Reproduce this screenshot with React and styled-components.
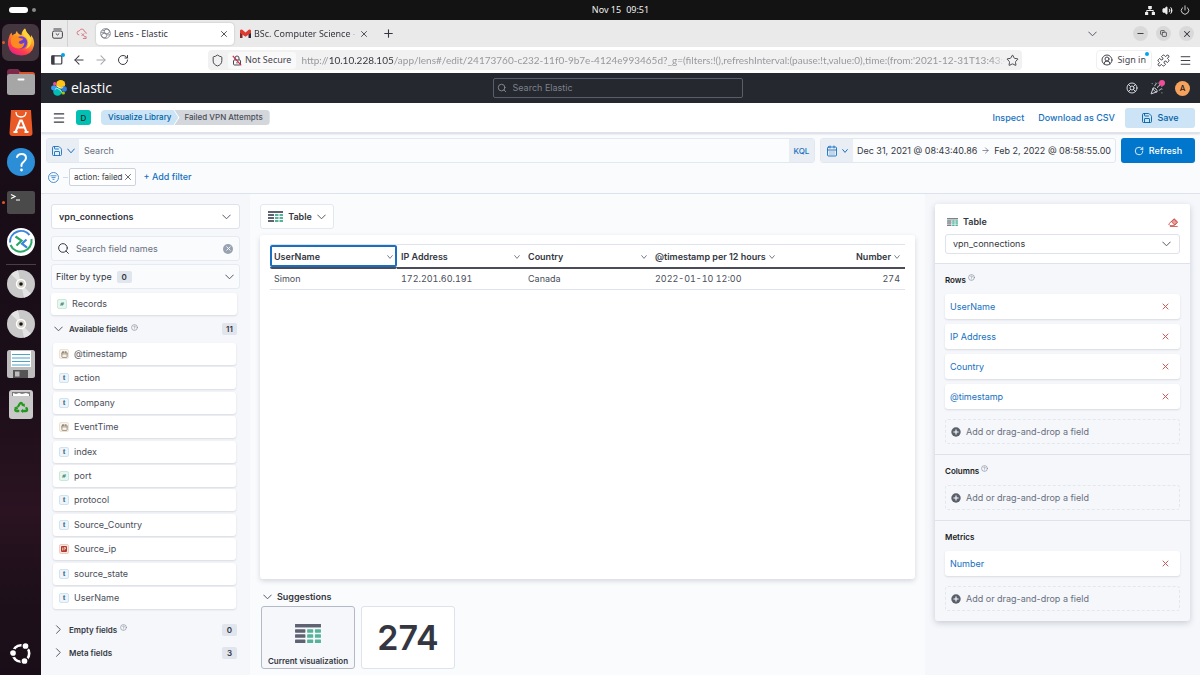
import React from "react";
import styled, { createGlobalStyle, css } from "styled-components";
import {
  ArrowLeft, ArrowRight, Calendar, CalendarDays, CircleHelp,
  CircleUserRound, LifeBuoy, Menu, Minus, PartyPopper, Plus, Power, Puzzle,
  RotateCw, Save, Search, Shield, Star, Volume2, X, Copy,
} from "lucide-react";

const c = {
  ink: "#343741",
  body: "#4a4e59",
  mute: "#69707d",
  link: "#1571bf",
  line: "#dde2ec",
  side: "#f5f7fb",
  page: "#fafbfd",
  badge: "#e0e5ee",
  shadow: "0 1px 2px rgba(60, 70, 90, 0.16)",
};
const ui = `Inter, "Liberation Sans", sans-serif`;
const chrome = `"Noto Sans", "Open Sans", sans-serif`;

const Global = createGlobalStyle`
  * { box-sizing: border-box; }
  body { margin: 0; font: 9px/12px ${ui}; color: ${c.ink}; background: ${c.page}; }
  button, input, select { font: inherit; color: inherit; margin: 0; padding: 0; border: 0; background: none; }
  button { cursor: pointer; display: inline-flex; align-items: center; justify-content: center; flex: none; white-space: nowrap; }
  a { text-decoration: none; color: ${c.link}; }
  svg { flex: none; display: block; }
  h2, h3, ul { margin: 0; padding: 0; font-size: inherit; list-style: none; }
`;

/* ---------- desktop shell ---------- */
const Desktop = styled.div`
  min-height: 100vh;
  display: grid;
  grid-template: 20px 1fr / 41px minmax(0, 1fr);
`;
const TopBar = styled.header`
  grid-column: 1 / -1;
  display: grid;
  grid-template-columns: 41px 1fr auto 1fr;
  align-items: center;
  background: #131313;
  color: #f0f0f0;
  font: 9px/12px ${chrome};
`;
const Workspaces = styled.div`
  grid-column: 1 / 3;
  display: flex;
  align-items: center;
  gap: 4px;
  padding-left: 9px;
`;
const Pill = styled.i`
  width: ${(p) => (p.$active ? 19 : 4)}px;
  height: ${(p) => (p.$active ? 6 : 4)}px;
  border-radius: 3px;
  background: ${(p) => (p.$active ? "#fff" : "#8a8a8a")};
`;
const Clock = styled.time`
  display: flex;
  gap: 5px;
`;
const Status = styled.div`
  display: flex;
  justify-content: flex-end;
  align-items: center;
  gap: 7px;
  padding-right: 10px;
`;
const Dock = styled.nav`
  display: flex;
  flex-direction: column;
  align-items: stretch;
  padding: 2px 0;
  background: linear-gradient(#170d16 0%, #1a0e18 55%, #2b1322 75%, #1f101b 85%, #190e18 100%);
`;
const DockItem = styled.button`
  height: 40px;
  position: relative;
  &::before {
    content: "";
    display: ${(p) => (p.$running ? "block" : "none")};
    position: absolute;
    left: 2px;
    top: 19px;
    width: 3px;
    height: 3px;
    border-radius: 50%;
    background: #e2572b;
  }
`;
const DockRule = styled.hr`
  width: 30px;
  height: 1px;
  margin: 2px auto -1px;
  border: 0;
  background: #4a3f49;
`;
const DockActive = styled.span`
  width: 37px;
  height: 37px;
  display: grid;
  place-items: center;
  border-radius: 7px;
  background: #43363f;
`;
const DockSpacer = styled.div`
  flex: 1;
`;

/* ---------- browser ---------- */
const Browser = styled.main`
  display: flex;
  flex-direction: column;
  min-width: 0;
`;
const TabStrip = styled.div`
  height: 27px;
  display: flex;
  align-items: center;
  padding: 0 6px 0 7px;
  background: #eaeaea;
  font: 9px/12px ${chrome};
  color: #35353d;
`;
const StripButton = styled.button`
  width: ${(p) => p.$w || 24}px;
  height: 27px;
  border-right: ${(p) => (p.$rule ? "1px solid #d2d2d2" : 0)};
`;
const Tab = styled.div`
  width: 138px;
  height: 22px;
  display: flex;
  align-items: center;
  gap: 3px;
  padding: 0 5px 0 4px;
  margin-right: 2px;
  border-radius: 4px;
  background: ${(p) => (p.$active ? "#fff" : "transparent")};
  box-shadow: ${(p) => (p.$active ? "0 0 2px rgba(0, 0, 0, 0.25)" : "none")};
`;
const TabTitle = styled.button`
  flex: 1 1 0;
  min-width: 0;
  justify-content: flex-start;
  ${(p) => p.$fade && "mask-image: linear-gradient(90deg, #000 calc(100% - 8px), transparent);"}
`;
const Grow = styled.div`
  flex: 1;
`;
const Windows = styled.div`
  display: flex;
  gap: 8px;
  margin-left: 24px;
`;
const WindowButton = styled.button`
  width: 15px;
  height: 15px;
  border-radius: 50%;
  background: #d9d9d9;
`;
const Toolbar = styled.div`
  height: 26px;
  display: flex;
  align-items: center;
  padding: 0 4px 0 5px;
  background: #fff;
  font: 9px/12px ${chrome};
  color: #45454d;
`;
const ToolButton = styled.button`
  width: 22px;
  height: 20px;
  position: relative;
  color: ${(p) => (p.$off ? "#a5a5aa" : "#3c3c44")};
`;
const BlueDot = styled.i`
  position: absolute;
  top: ${(p) => p.$top}px;
  right: ${(p) => p.$right}px;
  width: 4px;
  height: 4px;
  border-radius: 50%;
  background: #00a3ee;
`;
const UrlBar = styled.div`
  flex: 1;
  min-width: 0;
  max-width: 814px;
  height: 20px;
  margin: 0 auto 0 74px;
  display: flex;
  align-items: center;
  padding: 0 3px;
  border-radius: 4px;
  background: #f1f1f2;
`;
const Insecure = styled.button`
  height: 17px;
  gap: 3px;
  margin: 0 5px 0 4px;
  padding: 0 5px 0 4px;
  border-radius: 3px;
  background: #f9f9fa;
`;
const Url = styled.div`
  flex: 1;
  min-width: 0;
  overflow: hidden;
  white-space: nowrap;
  font: 10px/14px Lato, "Noto Sans", sans-serif;
  color: #98989d;
  mask-image: linear-gradient(90deg, #000 calc(100% - 14px), transparent);
  b { font-weight: 400; color: #38383f; }
`;
const SignIn = styled.button`
  position: relative;
  height: 20px;
  gap: 4px;
  padding: 0 5px 0 4px;
  border: 1px solid #f0f0f1;
  border-radius: 4px;
`;

/* ---------- elastic header ---------- */
const ElasticBar = styled.header`
  height: 30px;
  display: grid;
  grid-template-columns: 1fr 250px 1fr;
  align-items: center;
  padding: 0 10px 0 4px;
  background: #25282f;
  color: #fff;
`;
const Brand = styled.a`
  display: flex;
  align-items: center;
  gap: 4px;
  padding-left: 6px;
  color: #fff;
  font: 14px/18px "Open Sans", sans-serif;
`;
const GlobalSearch = styled.label`
  height: 20px;
  display: flex;
  align-items: center;
  gap: 6px;
  padding: 0 3px;
  border: 1px solid #5a5e68;
  border-radius: 2px;
  color: #9095a0;
  input { flex: 1; min-width: 0; outline: 0; }
  input::placeholder { color: #7c818c; opacity: 1; }
`;
const BarActions = styled.div`
  display: flex;
  justify-content: flex-end;
  align-items: center;
  gap: 12px;
`;
const BarButton = styled.button`
  position: relative;
  color: #d5d9e0;
`;
const PinkDot = styled.i`
  position: absolute;
  top: -2px;
  right: -2px;
  width: 6px;
  height: 6px;
  border-radius: 50%;
  background: #f04e98;
`;
const Avatar = styled.button`
  width: 15px;
  height: 15px;
  border-radius: ${(p) => (p.$square ? "3px" : "50%")};
  background: ${(p) => (p.$square ? "#00bfb3" : "#f5a35c")};
  color: #1a1c21;
  font-size: 8px;
  font-weight: 500;
`;
const NavBar = styled.nav`
  height: 30px;
  display: flex;
  align-items: center;
  gap: 10px;
  padding: 0 5px 0 11px;
  background: #fff;
  border-bottom: 1px solid ${c.line};
  box-shadow: 0 1px 2px rgba(60, 70, 90, 0.2);
  position: relative;
`;
const Crumbs = styled.div`
  display: flex;
  font: 500 8px/15px ${ui};
`;
const Crumb = styled.a`
  padding: 0 7px;
  color: ${(p) => (p.$last ? "#4a4e57" : "#0061a6")};
  background: ${(p) => (p.$last ? "#d3d6db" : "#cce4f5")};
  ${(p) =>
    p.$last
      ? css`
          margin-left: -4px;
          padding-left: 10px;
          border-radius: 0 4px 4px 0;
          clip-path: polygon(0 0, 100% 0, 100% 100%, 0 100%, 5px 50%);
        `
      : css`
          border-radius: 4px 0 0 4px;
          clip-path: polygon(0 0, calc(100% - 5px) 0, 100% 50%, calc(100% - 5px) 100%, 0 100%);
        `}
`;
const NavLink = styled.a`
  font-weight: 500;
  & + & { margin-left: 4px; }
`;
const SaveButton = styled.button`
  width: 70px;
  height: 20px;
  gap: 4px;
  border-radius: 3px;
  background: #cce4f5;
  color: #0061a6;
  font-weight: 500;
`;

/* ---------- query bar ---------- */
const QueryArea = styled.section`
  padding: 5px 5px 7px;
  background: ${c.page};
  border-bottom: 1px solid ${c.line};
`;
const QueryRow = styled.div`
  display: flex;
  gap: 5px;
  height: 25px;
`;
const Group = styled.div`
  display: flex;
  min-width: 0;
  flex: ${(p) => (p.$grow ? "1" : "0 0 auto")};
  border: 1px solid #e3e7f0;
  border-radius: 3px;
  overflow: hidden;
  background: #fbfcfd;
`;
const Addon = styled.button`
  width: ${(p) => p.$w}px;
  gap: 4px;
  background: #e9edf4;
  color: ${c.link};
  font-size: 8px;
  font-weight: 500;
`;
const QueryInput = styled.input`
  flex: 1;
  min-width: 0;
  padding: 0 5px !important;
  outline: 0;
  &::placeholder { color: ${c.mute}; opacity: 1; }
`;
const DateText = styled.button`
  padding: 0 4px;
`;
const ArrowSlot = styled.span`
  display: flex;
  align-items: center;
`;
const RefreshButton = styled.button`
  width: 74px;
  gap: 5px;
  border-radius: 3px;
  background: #0077cc;
  color: #fff;
  font-weight: 500;
`;
const FilterRow = styled.div`
  display: flex;
  align-items: center;
  height: 18px;
  margin-top: 5px;
  padding-left: 2px;
`;
const Chip = styled.span`
  display: flex;
  align-items: center;
  gap: 1px;
  height: 18px;
  padding: 0 2px 0 4px;
  margin: 0 7px 0 1px;
  border: 1px solid #cdd3de;
  border-radius: 2px;
  background: #fff;
  font-size: 8px;
`;
const TextButton = styled.button`
  color: ${c.link};
  font-weight: 500;
`;
const Tick = styled.i`
  width: 5px;
  height: 1px;
  margin-left: 4px;
  background: #d3dae6;
`;

/* ---------- workspace ---------- */
const Workspace = styled.div`
  flex: 1;
  display: grid;
  grid-template-columns: 209px minmax(0, 1fr) 275px;
`;
const Fields = styled.aside`
  padding: 10px;
  background: ${c.side};
  display: flex;
  flex-direction: column;
`;
const SelectBox = styled.div`
  display: grid;
  align-items: center;
  height: ${(p) => p.$h}px;
  margin-bottom: ${(p) => p.$mb || 0}px;
  border: 1px solid ${c.line};
  border-radius: 3px;
  background: #fff;
  > * { grid-area: 1 / 1; }
  > svg { justify-self: end; margin-right: 8px; pointer-events: none; }
  select {
    appearance: none;
    width: 100%;
    height: 100%;
    padding: 0 7px;
    font-weight: ${(p) => (p.$bold ? 600 : 400)};
    outline: 0;
  }
`;
const FieldSearch = styled.label`
  display: flex;
  align-items: center;
  gap: 6px;
  height: 25px;
  margin-bottom: 3px;
  padding: 0 6px 0 5px;
  border: 1px solid #e6eaf2;
  border-radius: 3px;
  background: #fafbfd;
  input { flex: 1; min-width: 0; outline: 0; }
  input::placeholder { color: ${c.mute}; opacity: 1; }
`;
const ClearButton = styled.button`
  width: 10px;
  height: 10px;
  border-radius: 50%;
  background: #98a2b3;
  color: #fff;
`;
const TypeFilter = styled.button`
  height: 25px;
  margin-bottom: 4px;
  padding: 0 5px 0 4px;
  gap: 5px;
  border: 1px solid #e6eaf2;
  border-radius: 3px;
  background: #fafbfd;
`;
const Badge = styled.span`
  min-width: 15px;
  height: 12px;
  padding: 0 3px;
  border-radius: 2px;
  background: ${c.badge};
  text-align: center;
  font-size: 8px;
  font-weight: 600;
`;
const FieldRow = styled.button`
  width: 100%;
  height: 22px;
  gap: 5px;
  padding: 0 6px;
  justify-content: flex-start;
  border-radius: 3px;
  background: #fff;
  box-shadow: ${c.shadow};
  color: ${c.body};
`;
const Records = styled.div`
  padding-right: 3px;
`;
const FieldList = styled.ul`
  min-height: 266px;
  padding: 0 4px 0 2px;
  display: flex;
  flex-direction: column;
  justify-content: space-between;
`;
const tokens = {
  t: ["#edf5fb", "#cfe3f1", "#3d678a"],
  "#": ["#e8f6f1", "#c8e9dd", "#2f7a63"],
  date: ["#f8f4ee", "#ece3d6", "#84735c"],
  ip: ["#fae7e2", "#f0cbc2", "#a3311f"],
};
const Token = styled.span`
  width: 10px;
  height: 10px;
  display: grid;
  place-items: center;
  border: 1px solid ${(p) => tokens[p.$kind][1]};
  border-radius: 2px;
  background: ${(p) => tokens[p.$kind][0]};
  color: ${(p) => tokens[p.$kind][2]};
  font: ${(p) => (p.$kind === "#" ? "italic 700 7px" : "700 8px")} / 8px "Liberation Serif", serif;
`;
const Accordion = styled.button`
  height: ${(p) => p.$h}px;
  gap: 6px;
  padding: 0 3px;
  font-size: 8px;
  font-weight: 600;
  > :last-child { margin-left: auto; }
  .help { margin: -4px 0 0 -3px; color: #7d838f; }
`;
const AccordionGap = styled.div`
  height: 9px;
`;

const Center = styled.section`
  padding: 10px 10px 6px;
  display: flex;
  flex-direction: column;
  background: ${c.page};
`;
const ChartSwitch = styled.button`
  align-self: flex-start;
  width: 74px;
  height: 25px;
  gap: 5px;
  border: 1px solid #e3e7f0;
  border-radius: 3px;
  background: #fff;
  font-weight: 600;
`;
const Canvas = styled.div`
  flex: 1;
  min-height: 200px;
  margin-top: 6px;
  padding: 9px 10px;
  border-radius: 3px;
  background: #fff;
  box-shadow: 0 2px 5px rgba(60, 70, 90, 0.2);
`;
const Table = styled.table`
  width: 100%;
  table-layout: fixed;
  border-collapse: separate;
  border-spacing: 0;
  tr > :last-child { text-align: right; padding-right: 5px; }
`;
const Th = styled.th`
  height: 25px;
  padding: 1px 4px 0;
  text-align: left;
  border-top: 1px solid ${c.line};
  border-bottom: 2px solid #4a4d57;
  box-shadow: ${(p) => (p.$focus ? "inset 0 0 0 2px #1a6fc0" : "none")};
  border-radius: ${(p) => (p.$focus ? "2px" : 0)};
`;
const Head = styled.button`
  width: 100%;
  gap: 3px;
  justify-content: ${(p) => (p.$end ? "flex-end" : p.$tight ? "flex-start" : "space-between")};
  font-weight: 600;
`;
const Td = styled.td`
  height: 21px;
  padding: 0 4px;
  border-bottom: 1px solid ${c.line};
  color: ${c.body};
  font-feature-settings: "tnum";
`;
const Suggest = styled.button`
  align-self: flex-start;
  height: 12px;
  margin: 12px 0 3px;
  padding-left: 3px;
  gap: 5px;
  font-weight: 600;
`;
const Cards = styled.div`
  display: flex;
  gap: 6px;
  padding-left: 1px;
`;
const Card = styled.button`
  width: 94px;
  height: 63px;
  flex-direction: column;
  border: 1px solid ${(p) => (p.$on ? "#b3b9c5" : c.line)};
  border-radius: 3px;
  background: ${(p) => (p.$on ? c.side : "#fff")};
  font-size: 8px;
  font-weight: 600;
  ${(p) => p.$on && "justify-content: flex-end; gap: 12px; padding-bottom: 1px;"}
`;
const Big = styled.span`
  font-size: 34px;
  line-height: 40px;
`;

const ConfigCol = styled.aside`
  padding: 10px;
  background: ${c.side};
`;
const Config = styled.div`
  border-radius: 3px;
  background: ${c.side};
  box-shadow: 0 2px 6px rgba(60, 70, 90, 0.24);
`;
const ConfigHead = styled.div`
  height: 60px;
  padding: 10px;
  border-bottom: 1px solid ${c.line};
  border-radius: 3px 3px 0 0;
  background: #fff;
`;
const ConfigTitle = styled.h2`
  height: 16px;
  margin-bottom: 4px;
  padding: 0 2px;
  display: flex;
  align-items: center;
  gap: 5px;
  font-weight: 600;
  button { margin-left: auto; }
`;
const Section = styled.section`
  padding: 10px;
  border-bottom: ${(p) => (p.$last ? 0 : `1px solid ${c.line}`)};
`;
const SectionTitle = styled.h3`
  display: flex;
  gap: 2px;
  margin-bottom: 8px;
  font: 600 8px/12px ${ui};
  color: #1a1c21;
  svg { color: #7d838f; }
`;
const Dimensions = styled.ul`
  display: grid;
  gap: 5px;
`;
const Dimension = styled.li`
  height: 25px;
  display: flex;
  align-items: center;
  justify-content: space-between;
  padding: 0 11px 0 5px;
  border-radius: 3px;
  background: #fff;
  box-shadow: ${c.shadow};
`;
const Remove = styled.button`
  color: #cf5a55;
`;
const AddField = styled.button`
  width: 100%;
  height: 25px;
  gap: 5px;
  padding: 0 5px;
  justify-content: flex-start;
  border: 1px dashed #e3e7ee;
  border-radius: 3px;
  color: ${c.mute};
  ul + & { margin-top: 10px; }
`;

/* ---------- drawings ---------- */
const TableGlyph = ({ w, h, light }) => {
  const dark = light ? "#7b818d" : "#5f6371";
  const green = "#54b399";
  return (
    <svg width={w} height={h} viewBox="0 0 30 22" aria-hidden="true">
      <rect width="30" height="4" fill={dark} />
      {[6, 12, 18].map((y) => (
        <g key={y}>
          <rect y={y} width="12" height="4" rx=".6" fill={dark} />
          <rect x="14" y={y} width="7" height="4" rx=".6" fill={green} />
          <rect x="23" y={y} width="7" height="4" rx=".6" fill={green} />
        </g>
      ))}
    </svg>
  );
};
const Firefox = () => (
  <svg width="28" height="28" viewBox="0 0 28 28">
    <defs>
      <linearGradient id="fox" x1=".85" y1=".05" x2=".3" y2="1">
        <stop offset="0" stopColor="#ffe84a" />
        <stop offset=".4" stopColor="#ff9a2a" />
        <stop offset=".75" stopColor="#ff3d4c" />
        <stop offset="1" stopColor="#e5218a" />
      </linearGradient>
    </defs>
    <path d="M1.500 11q.5-4 3-6.500l.8 3q1.500-1.500 3.200-1.800Q9 3.500 10 3q.5 3 4.500 4Q14.500 3 18 .5q.8 3.500 4 6.500 1.200 1 1.500 2.500.8-.5.500-2.500Q28 12 27 17.500 25 27 14.500 27.500 3 27.500 1 17q-.3-3 .5-6z" fill="url(#fox)" />
    <circle cx="14" cy="14.500" r="6.200" fill="#6a3fd4" />
    <path d="M4 10q3.500-3.500 8-1.500l-.5 1.300 5 .9q-1.500 2-3.500 2.200-1.500.6-1.200 2.200 2.200 1.900 5.700-.6-.5 6-6 6-6-.5-7.500-5z" fill="#ff8a1f" />
    <path d="M18 .5q-3.500 4-1 7.500 3 1 4 4.500.8 5-2.500 8.500 6-2 6-9-.5-3-2.500-5-3-3-4-6.500z" fill="#ffd23c" />
  </svg>
);
const Files = () => (
  <svg width="28" height="26" viewBox="0 0 28 26">
    <path d="M0 3q0-3 3-3h8l3 3h11q3 0 3 3v12H0z" fill="#7b2b49" />
    <path d="M12 3h13q3 0 3 3v10H12z" fill="#d9532c" />
    <rect y="5" width="28" height="21" rx="2.500" fill="#a6a6a6" />
    <rect x="10.500" y="9.500" width="7" height="2" rx="1" fill="#fff" />
  </svg>
);
const Store = () => (
  <svg width="24" height="27" viewBox="0 0 24 27">
    <path d="M2 1h20l1.500 23q0 3-3 3h-17q-3 0-3-3z" fill="#e95a26" />
    <path d="M7 3q0 5 5 5t5-5" fill="none" stroke="#fff" strokeWidth="1.300" />
    <path d="M6.500 23L11.200 11.500h1.600L17.500 23M8.500 18.500h7M4.500 23h4M15.500 23h4" fill="none" stroke="#fff" strokeWidth="2" />
  </svg>
);
const Help = () => (
  <svg width="28" height="28" viewBox="0 0 28 28">
    <circle cx="14" cy="14" r="14" fill="#2d8ed8" />
    <path d="M10 9q1-3 4.500-3 4.500 0 4.500 4 0 2-2.500 4T14.500 18" fill="none" stroke="#fff" strokeWidth="2" strokeLinecap="round" />
    <circle cx="14.500" cy="22" r="1.400" fill="#fff" />
  </svg>
);
const Terminal = () => (
  <svg width="28" height="23" viewBox="0 0 28 23">
    <rect width="28" height="23" rx="2.500" fill="#4a4a4a" />
    <path d="M4 3.500l4 2-4 2M9 9h4" fill="none" stroke="#fff" strokeWidth="1.200" />
  </svg>
);
const Remote = () => (
  <svg width="28" height="28" viewBox="0 0 28 28">
    <circle cx="14" cy="14" r="14" fill="#fff" />
    <path d="M3 14.500A11 11 0 0 1 22.500 7" fill="none" stroke="#3d86dc" strokeWidth="2" />
    <path d="M24.500 11A11 11 0 0 1 3.500 17" fill="none" stroke="#2aa866" strokeWidth="2" />
    <path d="M8.500 8.500l6 4.200-5 4.800" fill="none" stroke="#2aa866" strokeWidth="2.200" />
    <path d="M19.500 11.500l-4.500 4.200 5 4" fill="none" stroke="#3d86dc" strokeWidth="2.200" />
  </svg>
);
const Disc = () => (
  <svg width="28" height="28" viewBox="0 0 28 28">
    <circle cx="14" cy="14" r="14" fill="#c9c9c9" />
    <path d="M14 14L4 4.200A14 14 0 0 1 11 .3zM14 14l10 9.800a14 14 0 0 1-7 3.900z" fill="#e4e4e4" />
    <circle cx="14" cy="14" r="5.200" fill="#fff" />
    <circle cx="14" cy="14" r="3.800" fill="#d8d5ca" />
    <circle cx="14" cy="14" r="1.800" fill="#151515" />
  </svg>
);
const Floppy = () => (
  <svg width="28" height="28" viewBox="0 0 28 28">
    <rect width="28" height="28" rx="2.500" fill="#bdbdbd" />
    <rect x="4" y="1" width="20" height="16" fill="#fff" />
    <path d="M5 4.500h18M5 8h18M5 11.500h18M5 15h18" stroke="#4ea3c9" strokeWidth="1.200" />
    <rect x="6" y="20" width="15" height="8" fill="#555" />
    <rect x="8" y="21.500" width="4.500" height="5" fill="#bdbdbd" />
  </svg>
);
const Trash = () => (
  <svg width="24" height="29" viewBox="0 0 24 29">
    <rect width="24" height="29" rx="3" fill="#c9c9c9" />
    <path d="M3 2h18v4H3z" fill="#7a7a7a" />
    <path d="M4 3l3 1 3-1 3 1 4-1 3 1v2H4z" fill="#fff" />
    <g fill="none" stroke="#239a1f" strokeWidth="2.300">
      <path d="M8.800 17L11 13.500q1-1 2 0l1 1.800M17 17.200l1 2q.5 1.800-1.300 1.800H13.500M10.300 21H7.500q-1.800-.2-1-2l.8-1.400" />
    </g>
    <path d="M15.800 13.500v3.500l-3.300-1.500zM14 18.800V23l-2.500-2zM5 17.500l3.500-1.200.6 3.200z" fill="#239a1f" />
  </svg>
);
const Ubuntu = () => (
  <svg width="24" height="24" viewBox="0 0 24 24">
    <circle cx="12" cy="12.500" r="8.200" fill="none" stroke="#fff" strokeWidth="2.600" />
    {[[4, 12], [16.5, 5], [15.5, 20]].map(([x, y]) => (
      <circle key={y} cx={x} cy={y} r="3.500" fill="#fff" stroke="#190e18" strokeWidth="1.300" />
    ))}
  </svg>
);
const ElasticLogo = () => (
  <svg width="16" height="16" viewBox="0 0 16 16">
    <ellipse cx="9.700" cy="4.300" rx="4.500" ry="4.200" fill="#fec514" />
    <ellipse cx="6.500" cy="11.700" rx="4.300" ry="4.100" fill="#00bfb3" />
    <ellipse cx="3" cy="7.800" rx="2.900" ry="2.600" fill="#36a2ef" />
    <ellipse cx="13.200" cy="9" rx="2.700" ry="2.700" fill="#2d7fe0" />
    <ellipse cx="3.800" cy="3.800" rx="1.800" ry="1.700" fill="#f04e98" />
    <ellipse cx="12.200" cy="13" rx="1.800" ry="1.600" fill="#93c90e" />
    <path d="M5.200 5.800l5 2.500 2-1M3.800 9.500l2-1.400 4 2.400 1 2" fill="none" stroke="#fff" strokeWidth=".7" />
  </svg>
);
const Network = () => (
  <svg width="10" height="9" viewBox="0 0 11 10" fill="#eee">
    <path d="M3.500 0h4v3.300H6v1.200h3.500v2.200H11V10H7.500V6.700h1v-1.200h-6v1.200h1V10H0V6.700h1.500V4.500H5V3.300H3.500z" />
  </svg>
);
const TabOverview = () => (
  <svg width="11" height="11" viewBox="0 0 11 11" fill="none" stroke="#3c3c44">
    <path d="M1.500 1h8" />
    <rect x=".6" y="3" width="9.800" height="7.200" rx="1.500" />
    <path d="M3.800 5.500l1.700 1.500 1.700-1.500" />
  </svg>
);
const CloudTab = () => (
  <svg width="12" height="11" viewBox="0 0 12 12" fill="none" stroke="#d9707c">
    <path d="M3 7.500Q.6 7.500.6 5.300T3 3.200Q4 1 6.200 1.200 8.500 1.500 8.700 4q2.300.2 2 2.300" />
    <path d="M5.500 5.800l3 3M8.500 5.800l-3 3M8 9.500h2.500v2H7" />
  </svg>
);
const Globe = () => (
  <svg width="11" height="11" viewBox="0 0 12 12" fill="none" stroke="#666a75" strokeWidth=".8">
    <circle cx="6" cy="6" r="5.300" />
    <ellipse cx="7.500" cy="3.700" rx="2.800" ry="2.600" />
    <ellipse cx="4.500" cy="8.300" rx="2.800" ry="2.500" />
    <path d="M1 4.500l3.800.4M7.300 7.500l3.600 0M2.500 2.300L5 3" />
  </svg>
);
const Gmail = () => (
  <svg width="11" height="9" viewBox="0 0 11 9">
    <path d="M0 1v8h2.500V4z" fill="#7a2a2a" />
    <path d="M11 1v8H8.500V4z" fill="#222a3a" />
    <path d="M0 1.500Q.8 0 2.300.8L5.500 3.500 8.700.8Q10.200 0 11 1.500V4L5.500 7.800 0 4z" fill="#e0392f" />
  </svg>
);
const SidebarIcon = () => (
  <svg width="12" height="10" viewBox="0 0 12 10" fill="none" stroke="#3c3c44" strokeWidth="1.200">
    <rect x=".8" y=".8" width="10" height="8.200" rx="1" />
    <path d="M1 1h2v8H1z" fill="#3c3c44" />
  </svg>
);
const InsecureLock = () => (
  <svg width="10" height="11" viewBox="0 0 10 11" fill="none" stroke="#4a4a52">
    <rect x="1.500" y="5" width="7" height="5" rx="1" />
    <path d="M3 5V3q0-2 2-2t2 2v2M5 7v1.500" />
    <path d="M.8.800l8.400 9.600" stroke="#d7264c" strokeWidth="1.200" />
  </svg>
);
const Eraser = () => (
  <svg width="10" height="9" viewBox="0 0 16 14" fill="none" stroke="#c7403a" strokeWidth="1.300">
    <path d="M1 9.500L9 1.800q1-.9 2 0l3.500 3.500q.9 1 0 2L10 12H3.500L1 9.500z" />
    <path d="M5.500 5.500l5 5.500 4-4L10 1.500z" fill="#e8a09c" />
    <path d="M3 13.300h12.500" />
  </svg>
);
const AddGlyph = () => (
  <svg width="10" height="10" viewBox="0 0 10 10">
    <circle cx="5" cy="5" r="4.700" fill="#5a606b" />
    <path d="M5 2.400v5.200M2.400 5h5.200" stroke="#fff" strokeWidth="1.100" />
  </svg>
);
const FilterGlyph = () => (
  <svg width="11" height="11" viewBox="0 0 11 11" fill="none" stroke="#3a86c8" strokeWidth=".9">
    <circle cx="5.500" cy="5.500" r="5" />
    <path d="M2.500 3.800h6M3.500 5.600h4M4.600 7.400h1.800" />
  </svg>
);
const IpGlyph = () => (
  <svg width="6" height="6" viewBox="0 0 6 6">
    <rect width="6" height="6" rx="1" fill="#b03a28" />
    <path d="M1.500 1.500v3M3 4.500v-3h1.500v1.500H3" stroke="#f7ded8" strokeWidth=".7" fill="none" />
  </svg>
);
const Down = ({ w = 9, color = w > 7 ? "#555a66" : "#7a808c" }) => (
  <svg width={w} height="6" viewBox={`0 0 ${w} 6`} fill="none" stroke={color} strokeLinecap="round">
    <path d={`M.7 ${w > 7 ? 1 : 1.6}L${w / 2} ${w > 7 ? 4.8 : 4.4} ${w - 0.7} ${w > 7 ? 1 : 1.6}`} />
  </svg>
);
const Right = () => (
  <svg width="9" height="9" viewBox="0 0 9 9" fill="none" stroke="#555a66" strokeLinecap="round">
    <path d="M2.500.700L6.300 4.500 2.500 8.300" />
  </svg>
);
const RemoveGlyph = () => (
  <svg width="7" height="7" viewBox="0 0 7 7" stroke="#cf5a55" strokeLinecap="round">
    <path d="M1 1l5 5M6 1L1 6" />
  </svg>
);
const Hint = () => <CircleHelp className="help" size={7} strokeWidth={2} />;

const fields = [
  ["date", "@timestamp"], ["t", "action"], ["t", "Company"], ["date", "EventTime"],
  ["t", "index"], ["#", "port"], ["t", "protocol"], ["t", "Source_Country"],
  ["ip", "Source_ip"], ["t", "source_state"], ["t", "UserName"],
];
const columns = ["UserName", "IP Address", "Country", "@timestamp per 12 hours", "Number"];
const row = ["Simon", "172.201.60.191", "Canada", "2022-01-10 12:00", "274"];
const dockApps = [
  ["Files", Files], ["App Center", Store], ["Help", Help], ["Terminal", Terminal, true], ["Remote", Remote],
];
const dockMedia = [["Disc one", Disc], ["Disc two", Disc], ["Floppy", Floppy], ["Trash", Trash]];

const FieldItem = ({ kind, name }) => (
  <FieldRow>
    <Token $kind={kind}>
      {kind === "date" ? <Calendar size={7} strokeWidth={2.5} /> : kind === "ip" ? <IpGlyph /> : kind}
    </Token>
    {name}
  </FieldRow>
);

const ConfigSection = ({ title, hint, items = [], last }) => (
  <Section $last={last}>
    <SectionTitle>{title}{hint && <CircleHelp size={7} strokeWidth={2} />}</SectionTitle>
    {items.length > 0 && (
      <Dimensions>
        {items.map((name) => (
          <Dimension key={name}>
            <a href="#edit">{name}</a>
            <Remove aria-label={`Remove ${name}`}><RemoveGlyph /></Remove>
          </Dimension>
        ))}
      </Dimensions>
    )}
    <AddField><AddGlyph />Add or drag-and-drop a field</AddField>
  </Section>
);

export default function App() {
  return (
    <>
      <Global />
      <Desktop>
        <TopBar>
          <Workspaces><Pill $active /><Pill /></Workspaces>
          <Clock><span>Nov 15</span><span>09:51</span></Clock>
          <Status><Network /><Volume2 size={11} fill="#eee" strokeWidth={2} /><Power size={10} /></Status>
        </TopBar>

        <Dock aria-label="Dock">
          <DockItem $running aria-label="Firefox"><DockActive><Firefox /></DockActive></DockItem>
          {dockApps.map(([name, Glyph, running]) => (
            <DockItem key={name} $running={running} aria-label={name}><Glyph /></DockItem>
          ))}
          <DockRule />
          {dockMedia.map(([name, Glyph]) => (
            <DockItem key={name} aria-label={name}><Glyph /></DockItem>
          ))}
          <DockSpacer />
          <DockItem aria-label="Show applications"><Ubuntu /></DockItem>
        </Dock>

        <Browser>
          <TabStrip>
            <StripButton $w={20} $rule aria-label="Tab overview"><TabOverview /></StripButton>
            <StripButton $w={28} aria-label="Cloud tab"><CloudTab /></StripButton>
            <Tab $active>
              <Globe /><TabTitle>Lens - Elastic</TabTitle>
              <button aria-label="Close tab"><X size={10} strokeWidth={2} /></button>
            </Tab>
            <Tab>
              <Gmail /><TabTitle $fade>BSc. Computer Science - N</TabTitle>
              <button aria-label="Close tab"><X size={10} strokeWidth={2} /></button>
            </Tab>
            <StripButton $w={24} aria-label="New tab"><Plus size={13} strokeWidth={2} /></StripButton>
            <Grow />
            <StripButton $w={34} aria-label="List tabs"><Down /></StripButton>
            <Windows>
              <WindowButton aria-label="Minimize"><Minus size={9} strokeWidth={2.5} /></WindowButton>
              <WindowButton aria-label="Restore"><Copy size={7} strokeWidth={2.5} /></WindowButton>
              <WindowButton aria-label="Close"><X size={10} strokeWidth={2.5} /></WindowButton>
            </Windows>
          </TabStrip>

          <Toolbar>
            <ToolButton aria-label="Sidebar"><SidebarIcon /><BlueDot $top={3} $right={3} /></ToolButton>
            <ToolButton aria-label="Back"><ArrowLeft size={14} strokeWidth={1.8} /></ToolButton>
            <ToolButton $off aria-label="Forward"><ArrowRight size={14} strokeWidth={1.8} /></ToolButton>
            <ToolButton aria-label="Reload"><RotateCw size={12} /></ToolButton>
            <UrlBar>
              <button aria-label="Protection"><Shield size={13} strokeWidth={1.8} /></button>
              <Insecure><InsecureLock />Not Secure</Insecure>
              <Url role="textbox" aria-label="Address" contentEditable suppressContentEditableWarning>
                http://<b>10.10.228.105</b>/app/lens#/edit/24173760-c232-11f0-9b7e-4124e993465d?_g=(filters:!(),refreshInterval:(pause:!t,value:0),time:(from:'2021-12-31T13:43:40.86
              </Url>
              <button aria-label="Bookmark"><Star size={13} strokeWidth={1.8} /></button>
            </UrlBar>
            <SignIn><CircleUserRound size={12} />Sign in<BlueDot $top={1} $right={2} /></SignIn>
            <ToolButton aria-label="Extensions"><Puzzle size={13} strokeWidth={1.8} /></ToolButton>
            <ToolButton aria-label="Menu"><Menu size={13} strokeWidth={1.8} /></ToolButton>
          </Toolbar>

          <ElasticBar>
            <Brand href="#home"><ElasticLogo />elastic</Brand>
            <GlobalSearch>
              <Search size={10} />
              <input placeholder="Search Elastic" aria-label="Search Elastic" />
            </GlobalSearch>
            <BarActions>
              <BarButton aria-label="Help"><LifeBuoy size={12} strokeWidth={2} /></BarButton>
              <BarButton aria-label="News"><PartyPopper size={13} strokeWidth={1.8} /><PinkDot /></BarButton>
              <Avatar>A</Avatar>
            </BarActions>
          </ElasticBar>

          <NavBar>
            <button aria-label="Menu"><Menu size={14} strokeWidth={2} /></button>
            <Avatar $square>D</Avatar>
            <Crumbs>
              <Crumb href="#library">Visualize Library</Crumb>
              <Crumb href="#current" $last>Failed VPN Attempts</Crumb>
            </Crumbs>
            <Grow />
            <NavLink href="#inspect">Inspect</NavLink>
            <NavLink href="#csv">Download as CSV</NavLink>
            <SaveButton><Save size={12} strokeWidth={1.8} />Save</SaveButton>
          </NavBar>

          <QueryArea>
            <QueryRow>
              <Group $grow>
                <Addon $w={32} aria-label="Saved queries"><Save size={12} strokeWidth={1.8} /><Down w={8} color={c.link} /></Addon>
                <QueryInput placeholder="Search" aria-label="Query" />
                <Addon $w={25}>KQL</Addon>
              </Group>
              <Group>
                <Addon $w={32} aria-label="Quick dates"><CalendarDays size={12} strokeWidth={1.8} /><Down w={6} color={c.link} /></Addon>
                <DateText>Dec 31, 2021 @ 08:43:40.86</DateText>
                <ArrowSlot><ArrowRight size={9} color={c.mute} /></ArrowSlot>
                <DateText>Feb 2, 2022 @ 08:58:55.00</DateText>
              </Group>
              <RefreshButton><RotateCw size={10} strokeWidth={2} />Refresh</RefreshButton>
            </QueryRow>
            <FilterRow>
              <button aria-label="Filter options"><FilterGlyph /></button>
              <Tick />
              <Chip>action: failed<button aria-label="Remove filter"><X size={10} strokeWidth={1.8} /></button></Chip>
              <TextButton>+ Add filter</TextButton>
            </FilterRow>
          </QueryArea>

          <Workspace>
            <Fields>
              <SelectBox $h={25} $mb={7} $bold>
                <select aria-label="Data view"><option>vpn_connections</option></select><Down />
              </SelectBox>
              <FieldSearch>
                <Search size={13} strokeWidth={1.8} />
                <input placeholder="Search field names" aria-label="Search field names" />
                <ClearButton aria-label="Clear"><X size={7} strokeWidth={3} /></ClearButton>
              </FieldSearch>
              <TypeFilter>Filter by type<Badge>0</Badge><Grow as="span" /><Down /></TypeFilter>
              <Records><FieldItem kind="#" name="Records" /></Records>
              <Accordion $h={28}><Down />Available fields<Hint /><Badge>11</Badge></Accordion>
              <FieldList>
                {fields.map(([kind, name]) => <li key={name}><FieldItem kind={kind} name={name} /></li>)}
              </FieldList>
              <AccordionGap />
              <Accordion $h={23}><Right />Empty fields<Hint /><Badge>0</Badge></Accordion>
              <Accordion $h={23}><Right />Meta fields<Badge>3</Badge></Accordion>
            </Fields>

            <Center>
              <ChartSwitch><TableGlyph w={15} h={11} />Table<Down /></ChartSwitch>
              <Canvas>
                <Table>
                  <thead>
                    <tr>
                      {columns.map((name, i) => (
                        <Th key={name} $focus={i === 0}>
                          <Head $end={i === 4} $tight={i === 3}>{name}<Down w={6} /></Head>
                        </Th>
                      ))}
                    </tr>
                  </thead>
                  <tbody><tr>{row.map((v) => <Td key={v}>{v}</Td>)}</tr></tbody>
                </Table>
              </Canvas>
              <Suggest><Down />Suggestions</Suggest>
              <Cards>
                <Card $on><TableGlyph w={26} h={19} />Current visualization</Card>
                <Card><Big>274</Big></Card>
              </Cards>
            </Center>

            <ConfigCol>
              <Config>
                <ConfigHead>
                  <ConfigTitle><TableGlyph w={11} h={8} light />Table<button aria-label="Reset layer"><Eraser /></button></ConfigTitle>
                  <SelectBox $h={20}>
                    <select aria-label="Layer data view"><option>vpn_connections</option></select><Down />
                  </SelectBox>
                </ConfigHead>
                <ConfigSection title="Rows" hint items={["UserName", "IP Address", "Country", "@timestamp"]} />
                <ConfigSection title="Columns" hint />
                <ConfigSection title="Metrics" items={["Number"]} last />
              </Config>
            </ConfigCol>
          </Workspace>
        </Browser>
      </Desktop>
    </>
  );
}
